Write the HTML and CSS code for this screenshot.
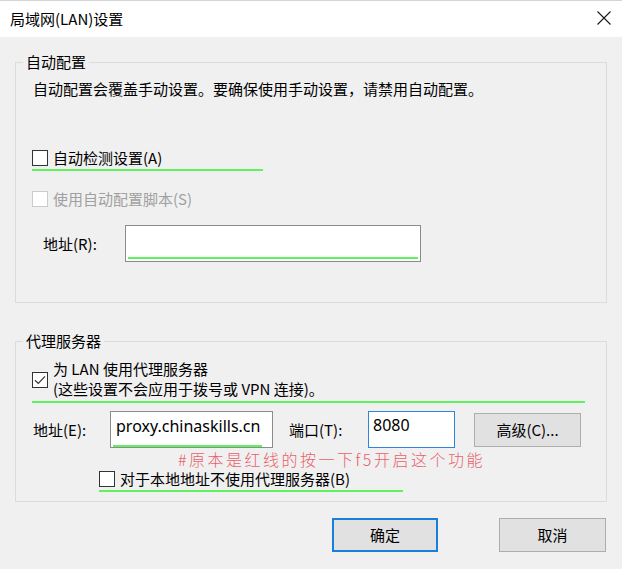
FILE: index.html
```html
<!DOCTYPE html>
<html lang="zh-CN">
<head>
<meta charset="utf-8">
<title>局域网(LAN)设置</title>
<link rel="stylesheet" href="styles.css">
</head>
<body>
<div class="dialog">
  <header class="titlebar">
    <span class="title">局域网(LAN)设置</span>
    <svg class="close" width="14" height="14" viewBox="0 0 14 14"><path d="M0.5 0.5L13.5 13.5M13.5 0.5L0.5 13.5" stroke="#1a1a1a" stroke-width="1.1" fill="none"/></svg>
  </header>
  <main class="content">
    <fieldset class="group g-auto">
      <legend>自动配置</legend>
      <div class="inner">
        <p class="desc">自动配置会覆盖手动设置。要确保使用手动设置，请禁用自动配置。</p>
        <div class="check r-detect"><span class="box"></span><span>自动检测设置(A)</span></div>
        <span class="mark m-detect"></span>
        <div class="check disabled r-script"><span class="box"></span><span>使用自动配置脚本(S)</span></div>
        <div class="row r-scriptaddr">
          <span class="lbl lbl-r">地址(R):</span>
          <div class="field f-script"><span class="mark m-script"></span></div>
        </div>
      </div>
    </fieldset>

    <fieldset class="group g-proxy">
      <legend>代理服务器</legend>
      <div class="inner">
        <div class="check r-proxy">
          <span class="box checked"><svg width="12" height="10" viewBox="0 0 12 10"><path d="M1 5.2L4.3 8.4L11 1.3" stroke="#333" stroke-width="1.2" fill="none"/></svg></span>
          <span class="two">为 LAN 使用代理服务器<br>(这些设置不会应用于拨号或 VPN 连接)。</span>
        </div>
        <span class="mark m-proxy"></span>
        <div class="row r-addr">
          <span class="lbl lbl-e">地址(E):</span>
          <div class="field f-addr"><span class="val">proxy.chinaskills.cn</span><span class="mark m-addr"></span></div>
          <span class="lbl lbl-t">端口(T):</span>
          <div class="field f-port focused"><span class="val">8080</span></div>
          <button class="btn btn-adv">高级(C)...</button>
        </div>
        <p class="note">#原本是红线的按一下f5开启这个功能</p>
        <div class="check r-local"><span class="box"></span><span>对于本地地址不使用代理服务器(B)</span></div>
        <span class="mark m-local"></span>
      </div>
    </fieldset>

    <div class="actions">
      <button class="btn btn-ok">确定</button>
      <button class="btn btn-cancel">取消</button>
    </div>
  </main>
</div>
</body>
</html>
```

FILE: styles.css
```css
* { box-sizing: border-box; }
html, body { margin: 0; padding: 0; }
body {
  background: #f0f0f0;
  font-family: "Noto Sans CJK SC", "Noto Sans", sans-serif;
  font-size: 15px;
  line-height: 20px;
  color: #000;
}
.dialog { width: 622px; height: 569px; display: flex; flex-direction: column; }

.titlebar {
  height: 37px;
  background: #fff;
  border-top: 1px solid #d4d4d4;
  display: flex;
  align-items: center;
  justify-content: space-between;
  padding: 0 11px 0 10px;
}
.title { font-size: 15px; line-height: 20px; }
.close { margin-top: -3px; }

.content { padding: 0 15px; display: flex; flex-direction: column; }

.group {
  margin: 0;
  padding: 0;
  border: 1px solid #dcdcdc;
  min-width: 0;
}
.group legend {
  margin-left: 7px;
  padding: 0 3px;
  font-size: 15px;
  line-height: 20px;
}
.g-auto { margin-top: 15px; padding-bottom: 40px; }
.g-proxy { margin-top: 28px; padding-bottom: 9px; }

.inner { display: flex; flex-direction: column; align-items: flex-start; padding-left: 16px; }

.desc { margin: 7px 0 0 1px; }

.check { display: flex; align-items: center; gap: 5px; height: 20px; }
.box {
  width: 16px; height: 16px;
  border: 1px solid #333;
  background: #fff;
  display: flex; align-items: center; justify-content: center;
  flex: none;
}
.check.disabled { color: #a0a0a0; }
.check.disabled .box { border-color: #cccccc; }

.mark { display: block; height: 2px; background: #5ef25e; }

.r-detect { margin-top: 49px; }
.m-detect { margin-top: 1px; width: 231px; }
.r-script { margin-top: 18px; }

.row { display: flex; align-items: center; }
.r-scriptaddr { margin-top: 16px; }
.lbl-r { margin-left: 11px; width: 82px; }

.field {
  height: 37px;
  border: 1px solid #8c8c8c;
  background: #fff;
  display: flex;
  flex-direction: column;
  align-items: flex-start;
}
.field.focused { border-color: #2f84dc; }
.f-script { width: 296px; }
.m-script { margin-top: 31px; margin-left: 2px; width: 290px; }

.r-proxy { height: 40px; margin-top: 8px; align-items: center; }
.r-proxy .box { margin-top: 2px; }
.two { display: block; }
.m-proxy { margin-top: 2px; width: 553px; }

.r-addr { margin-top: 8px; }
.lbl-e { margin-left: 1px; width: 77px; }
.f-addr { width: 163px; padding-top: 4px; }
.val { font-family: "Noto Sans", sans-serif; font-size: 16px; line-height: 20px; padding-left: 5px; }
.m-addr { margin-top: 9px; margin-left: 2px; width: 149px; }
.lbl-t { margin-left: 16px; width: 79px; }
.f-port { width: 87px; padding-top: 3px; }
.f-port .val { padding-left: 4px; }

.btn {
  font-family: "Noto Sans CJK SC", "Noto Sans", sans-serif;
  font-size: 15px;
  line-height: 20px;
  color: #000;
  background: #e1e1e1;
  border: 1px solid #adadad;
  padding: 0;
  width: 107px;
  height: 34px;
}
.btn-adv { margin-left: 19px; }

.note {
  margin: 3px 0 0 146px;
  font-size: 16px;
  line-height: 16px;
  font-weight: 300;
  letter-spacing: 2.5px;
  color: #e8606b;
}
.r-local { margin-top: 2px; margin-left: 67px; }
.m-local { margin-top: 1px; margin-left: 67px; width: 304px; }

.actions {
  margin-top: 16px;
  display: flex;
  justify-content: flex-end;
  gap: 61px;
  padding-right: 1px;
}
.btn-ok { width: 106px; border: 2px solid #1a7fdc; }
.btn-cancel { width: 107px; }
```
